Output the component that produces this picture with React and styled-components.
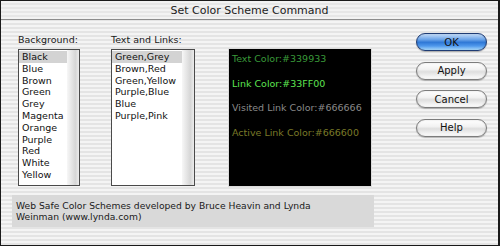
import React from "react";
import styled, { createGlobalStyle } from "styled-components";

const Global = createGlobalStyle`
  html, body { margin: 0; padding: 0; background: #fff; }
  body { font-family: "DejaVu Sans", "Liberation Sans", sans-serif; }
  * { box-sizing: border-box; }
`;

const stripes = `repeating-linear-gradient(to bottom, #f4f4f4 0px, #f4f4f4 2px, #e4e4e4 2px, #e4e4e4 4px)`;

const Window = styled.div`
  width: 500px;
  height: 246px;
  border: 1px solid #1a1a1a;
  border-right-width: 2px;
  background: ${stripes};
  display: flex;
  flex-direction: column;
  overflow: hidden;
`;

const TitleBar = styled.div`
  height: 19px;
  flex: none;
  border-bottom: 1px solid #8c8c8c;
  background: repeating-linear-gradient(to bottom, #f2f2f2 0px, #f2f2f2 2px, #e6e6e6 2px, #e6e6e6 4px);
  display: flex;
  align-items: center;
  justify-content: center;
  font-size: 11px;
  color: #1c1c1c;
  padding-top: 1px;
`;

const Body = styled.div`
  display: flex;
  padding: 13px 0 0 11px;
`;

const Main = styled.div`
  display: flex;
  flex-direction: column;
`;

const Panels = styled.div`
  display: flex;
  align-items: flex-start;
  padding-left: 6px;
`;

const Group = styled.div`
  display: flex;
  flex-direction: column;
  margin-right: ${(p) => p.$gap}px;
`;

const Label = styled.div`
  height: 13px;
  line-height: 13px;
  font-size: 9.5px;
  color: #1a1a1a;
  margin-bottom: 3px;
  white-space: nowrap;
`;

const ListBox = styled.div`
  width: ${(p) => p.$w}px;
  height: 137px;
  border: 1px solid #4a4a4a;
  background: #fff;
  display: flex;
`;

const Items = styled.div`
  flex: 1;
  padding-top: 1px;
  display: flex;
  flex-direction: column;
`;

const Item = styled.div`
  height: 11.8px;
  line-height: 11.8px;
  font-size: 9.5px;
  padding-left: 3px;
  color: #111;
  white-space: nowrap;
  background: ${(p) => (p.$sel ? "#d3d3d3" : "transparent")};
`;

const Track = styled.div`
  width: 12px;
  flex: none;
  background: linear-gradient(to right, #f7f7f7 0%, #e2e2e2 45%, #d6d6d6 70%, #ececec 100%);
`;

const Preview = styled.div`
  margin-top: 15px;
  width: 144px;
  height: 139px;
  border: 1px solid #dcdcdc;
  background: #000;
  padding: 4px 0 0 3px;
  display: flex;
  flex-direction: column;
  gap: 12.5px;
`;

const PLine = styled.div`
  font-size: 9.5px;
  line-height: 12px;
  white-space: nowrap;
  color: ${(p) => p.$c};
`;

const Note = styled.div`
  margin-top: 8px;
  width: 362px;
  height: 32px;
  background: #d9d9d9;
  padding: 5px 0 0 4px;
  font-size: 9.2px;
  line-height: 11px;
  color: #1a1a1a;
`;

const Buttons = styled.div`
  display: flex;
  flex-direction: column;
  gap: 10.5px;
  margin-left: 42px;
`;

const Button = styled.div`
  width: 71px;
  height: 18px;
  border-radius: 9px;
  display: flex;
  align-items: center;
  justify-content: center;
  font-size: 10px;
  color: #111;
  border: 1px solid ${(p) => (p.$primary ? "#1f3c74" : "#7c7c7c")};
  background: ${(p) =>
    p.$primary
      ? "linear-gradient(to bottom, #c4dcf8 0%, #6aa3e8 35%, #2f78d6 52%, #4f98ec 75%, #a9dafd 100%)"
      : "linear-gradient(to bottom, #ffffff 0%, #f2f2f2 40%, #dedede 55%, #f0f0f0 80%, #ffffff 100%)"};
  box-shadow: 0 1px 1px rgba(0, 0, 0, 0.25), inset 0 0 2px rgba(0,0,0,0.15);
`;

const backgrounds = ["Black", "Blue", "Brown", "Green", "Grey", "Magenta", "Orange", "Purple", "Red", "White", "Yellow"];
const schemes = ["Green,Grey", "Brown,Red", "Green,Yellow", "Purple,Blue", "Blue", "Purple,Pink"];

export default function App() {
  return (
    <>
      <Global />
      <Window>
        <TitleBar>Set Color Scheme Command</TitleBar>
        <Body>
          <Main>
            <Panels>
              <Group $gap={31}>
                <Label>Background:</Label>
                <ListBox $w={62}>
                  <Items>
                    {backgrounds.map((b, i) => (
                      <Item key={b} $sel={i === 0}>{b}</Item>
                    ))}
                  </Items>
                  <Track />
                </ListBox>
              </Group>
              <Group $gap={33}>
                <Label>Text and Links:</Label>
                <ListBox $w={84}>
                  <Items>
                    {schemes.map((b, i) => (
                      <Item key={b} $sel={i === 0}>{b}</Item>
                    ))}
                  </Items>
                  <Track />
                </ListBox>
              </Group>
              <Preview>
                <PLine $c="#3a9a3a">Text Color:#339933</PLine>
                <PLine $c="#5ee452">Link Color:#33FF00</PLine>
                <PLine $c="#8a8a8a">Visited Link Color:#666666</PLine>
                <PLine $c="#7a7a28">Active Link Color:#666600</PLine>
              </Preview>
            </Panels>
            <Note>
              Web Safe Color Schemes developed by Bruce Heavin and Lynda
              <br />
              Weinman (www.lynda.com)
            </Note>
          </Main>
          <Buttons>
            <Button $primary>OK</Button>
            <Button>Apply</Button>
            <Button>Cancel</Button>
            <Button>Help</Button>
          </Buttons>
        </Body>
      </Window>
    </>
  );
}
